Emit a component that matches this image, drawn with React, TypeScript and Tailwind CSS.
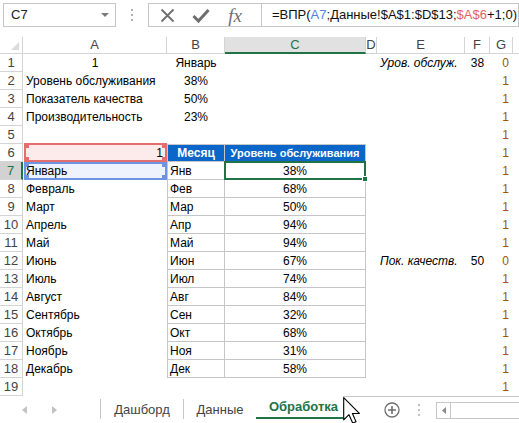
import React from 'react';

type R = { a?: string; aAl?: 'c' | 'r'; b?: string; c?: string; e?: string; f?: string; g?: string };

const rows: R[] = [
  { a: '1', aAl: 'c', b: 'Январь', e: 'Уров. обслуж.', f: '38', g: '0' },
  { a: 'Уровень обслуживания', b: '38%', g: '1' },
  { a: 'Показатель качества', b: '50%', g: '1' },
  { a: 'Производительность', b: '23%', g: '1' },
  { g: '1' },
  { a: '1', aAl: 'r', b: 'Месяц', c: 'Уровень обслуживания', g: '1' },
  { a: 'Январь', b: 'Янв', c: '38%', g: '1' },
  { a: 'Февраль', b: 'Фев', c: '68%', g: '1' },
  { a: 'Март', b: 'Мар', c: '50%', g: '1' },
  { a: 'Апрель', b: 'Апр', c: '94%', g: '1' },
  { a: 'Май', b: 'Май', c: '94%', g: '1' },
  { a: 'Июнь', b: 'Июн', c: '67%', e: 'Пок. качеств.', f: '50', g: '0' },
  { a: 'Июль', b: 'Июл', c: '74%', g: '1' },
  { a: 'Август', b: 'Авг', c: '84%', g: '1' },
  { a: 'Сентябрь', b: 'Сен', c: '32%', g: '1' },
  { a: 'Октябрь', b: 'Окт', c: '68%', g: '1' },
  { a: 'Ноябрь', b: 'Ноя', c: '31%', g: '1' },
  { a: 'Декабрь', b: 'Дек', c: '58%', g: '1' },
  { g: '1' },
];

function Corners({ color }: { color: string }) {
  return (
    <>
      <span className={`absolute -left-[1px] -top-[1px] w-[4px] h-[4px] ${color}`} />
      <span className={`absolute -right-[1px] -top-[1px] w-[4px] h-[4px] ${color}`} />
      <span className={`absolute -left-[1px] -bottom-[1px] w-[4px] h-[4px] ${color}`} />
      <span className={`absolute -right-[1px] -bottom-[1px] w-[4px] h-[4px] ${color}`} />
    </>
  );
}

function TopBar() {
  return (
    <div className="h-[37px] flex items-start pt-[3px] pl-[3px]">
      <div className="w-[113px] h-[24px] border border-[#c6c6c6] flex items-center justify-between pl-[7px] pr-[6px] text-[13px] text-[#222]">
        <span>C7</span>
        <svg width="8" height="5" viewBox="0 0 8 5"><path d="M0 0 L8 0 L4 4 Z" fill="#7a7a7a" /></svg>
      </div>
      <div className="w-[32px] h-[24px] flex flex-col items-center justify-center gap-[3px]">
        <span className="w-[2px] h-[2px] bg-[#b0b0b0]" />
        <span className="w-[2px] h-[2px] bg-[#b0b0b0]" />
        <span className="w-[2px] h-[2px] bg-[#b0b0b0]" />
      </div>
      <div className="w-[114px] h-[24px] border border-[#c6c6c6] flex items-center pl-[1px]">
        <div className="w-[34px] flex justify-center">
          <svg width="15" height="15" viewBox="0 0 15 15">
            <path d="M1.5 1.5 L13.5 13.5 M13.5 1.5 L1.5 13.5" stroke="#6e6e6e" strokeWidth="1.8" />
          </svg>
        </div>
        <div className="w-[34px] flex justify-center">
          <svg width="18" height="15" viewBox="0 0 18 15">
            <path d="M1.5 8 L6.5 13 L16.5 2" stroke="#6e6e6e" strokeWidth="3" fill="none" />
          </svg>
        </div>
        <div className="w-[34px] flex justify-center">
          <span className="font-['Liberation_Serif',serif] italic text-[19px] leading-none text-[#6e6e6e]">fx</span>
        </div>
      </div>
      <div className="flex-1 h-[24px] border border-l-0 border-[#c6c6c6] flex items-center pl-[10px] text-[13px] whitespace-nowrap overflow-hidden text-[#111]">
        <span>=ВПР(</span>
        <span className="text-[#4f81dc]">A7</span>
        <span>;Данные!$A$1:$D$13;</span>
        <span className="text-[#e36363]">$A$6</span>
        <span>+1;0)</span>
      </div>
    </div>
  );
}

function ColHeader() {
  const base = 'h-full border-r border-b border-[#d4d4d4] flex items-center justify-center';
  return (
    <div className="h-[17px] flex text-[13px] text-[#444]">
      <div className={`w-[23px] ${base} relative`}>
        <svg className="absolute right-[3px] bottom-[3px]" width="8" height="8" viewBox="0 0 8 8">
          <path d="M8 0 L8 8 L0 8 Z" fill="#dcdcdc" />
        </svg>
      </div>
      <div className={`w-[144px] ${base}`}>A</div>
      <div className={`w-[58px] ${base}`}>B</div>
      <div className="w-[141px] h-full border-r border-[#d4d4d4] border-b-2 border-b-[#217346] bg-[#e1e1e1] text-[#217346] flex items-center justify-center">C</div>
      <div className={`w-[11px] ${base}`}>D</div>
      <div className={`w-[88px] ${base}`}>E</div>
      <div className={`w-[25px] ${base}`}>F</div>
      <div className={`w-[23px] ${base}`}>G</div>
      <div className="flex-1 h-full border-b border-[#d4d4d4]" />
    </div>
  );
}

function SheetRow({ r, n }: { r: R; n: number }) {
  const header = n === 6;
  const table = n >= 7 && n <= 18;
  const sel = n === 7;
  return (
    <div className="h-[18px] flex text-[12px] leading-none">
      <div
        className={
          sel
            ? 'w-[23px] h-full border-b border-[#d4d4d4] border-r-2 border-r-[#217346] bg-[#d2d2d2] text-[#217346] text-[13px] flex items-center justify-center'
            : 'w-[23px] h-full border-r border-b border-[#d4d4d4] text-[#444] text-[13px] flex items-center justify-center'
        }
      >
        {n}
      </div>
      <div
        className={
          'w-[144px] h-full relative flex items-center px-[3px] ' +
          (r.aAl === 'c' ? 'justify-center' : r.aAl === 'r' ? 'justify-end pr-[4px]' : 'justify-start')
        }
      >
        {n === 6 && (
          <div className="absolute left-[1px] top-[-1px] right-0 bottom-0 border-2 border-[#e46d6d] bg-[#fdeaea]">
            <Corners color="bg-[#e46d6d]" />
          </div>
        )}
        {n === 7 && (
          <div className="absolute left-[1px] top-0 right-0 bottom-0 border-2 border-[#6d94e3] bg-[#edf2fc]">
            <Corners color="bg-[#6d94e3]" />
          </div>
        )}
        <span className="relative whitespace-nowrap">{r.a}</span>
      </div>
      <div
        className={
          header
            ? 'w-[58px] h-full flex items-center justify-center bg-[#0a66c8] text-white font-bold border border-[#c6c6c6]'
            : table
            ? 'w-[58px] h-full flex items-center pl-[2px] border-l border-r border-b border-[#c6c6c6]'
            : 'w-[58px] h-full flex items-center justify-center'
        }
      >
        {r.b}
      </div>
      <div
        className={
          header
            ? 'w-[141px] h-full flex items-center justify-center bg-[#0a66c8] text-white font-bold text-[11px] border-t border-r border-b border-[#c6c6c6] whitespace-nowrap'
            : table
            ? 'w-[141px] h-full flex items-center justify-center border-r border-b border-[#c6c6c6] relative'
            : 'w-[141px] h-full'
        }
      >
        {sel && (
          <div className="absolute left-[-1px] top-[-1px] right-[-1px] bottom-[-1px] border-2 border-[#217346] z-10">
            <span className="absolute right-[-4px] bottom-[-4px] w-[6px] h-[6px] bg-[#217346] border border-white" />
          </div>
        )}
        {r.c}
      </div>
      <div className="w-[11px] h-full" />
      <div className="w-[88px] h-full flex items-center pl-[3px] italic whitespace-nowrap">{r.e}</div>
      <div className="w-[25px] h-full flex items-center justify-center">{r.f}</div>
      <div className="w-[23px] h-full flex items-center justify-end pr-[4px] text-[#9c5700]">{r.g}</div>
      <div className="flex-1 h-full" />
    </div>
  );
}

function TabBar() {
  return (
    <div className="h-[27px] flex items-start text-[13px] text-[#444] relative">
      <div className="w-[100px] h-full flex items-center">
        <svg className="ml-[22px]" width="5" height="8" viewBox="0 0 5 8"><path d="M5 0 L5 8 L0 4 Z" fill="#c3c3c3" /></svg>
        <svg className="ml-[25px]" width="5" height="8" viewBox="0 0 5 8"><path d="M0 0 L0 8 L5 4 Z" fill="#c3c3c3" /></svg>
      </div>
      <div className="w-px h-[20px] mt-[3px] bg-[#c6c6c6]" />
      <div className="w-[82px] h-full flex items-center justify-center">Дашборд</div>
      <div className="w-px h-[20px] mt-[3px] bg-[#c6c6c6]" />
      <div className="w-[72px] h-full flex items-center justify-center">Данные</div>
      <div className="w-[87px] h-[23px] border-b-2 border-[#217346] bg-white flex items-center justify-center pl-[8px] font-bold text-[#217346]">
        Обработка
      </div>
      <div className="flex-1 h-full border-t border-[#c6c6c6] flex items-center">
        <svg className="ml-[41px]" width="16" height="16" viewBox="0 0 16 16">
          <circle cx="8" cy="8" r="7" stroke="#6e6e6e" strokeWidth="1.3" fill="none" />
          <path d="M8 4 L8 12 M4 8 L12 8" stroke="#6e6e6e" strokeWidth="1.6" />
        </svg>
        <div className="ml-[18px] flex flex-col gap-[3px]">
          <span className="w-[2px] h-[2px] bg-[#c0c0c0]" />
          <span className="w-[2px] h-[2px] bg-[#c0c0c0]" />
          <span className="w-[2px] h-[2px] bg-[#c0c0c0]" />
        </div>
        <div className="ml-[16px] flex-1 h-[17px] border border-r-0 border-[#c6c6c6] flex">
          <div className="w-[14px] h-full border-r border-[#c6c6c6] flex items-center justify-center">
            <svg width="4" height="7" viewBox="0 0 4 7"><path d="M4 0 L4 7 L0 3.5 Z" fill="#8a8a8a" /></svg>
          </div>
        </div>
      </div>
      <svg className="absolute left-[343px] top-[1px]" width="18" height="27" viewBox="0 0 13 19.5">
        <path d="M0.5 0.5 L0.5 16.5 L4.3 12.8 L7 18.8 L9.4 17.8 L6.8 11.9 L11.8 11.9 Z" fill="white" stroke="black" strokeWidth="0.8" strokeLinejoin="round" />
      </svg>
    </div>
  );
}

export default function App() {
  return (
    <div className="w-[519px] h-[423px] overflow-hidden bg-white font-['Liberation_Sans',Arial,sans-serif] text-black">
      <TopBar />
      <ColHeader />
      {rows.map((r, i) => (
        <SheetRow key={i} r={r} n={i + 1} />
      ))}
      <TabBar />
    </div>
  );
}
